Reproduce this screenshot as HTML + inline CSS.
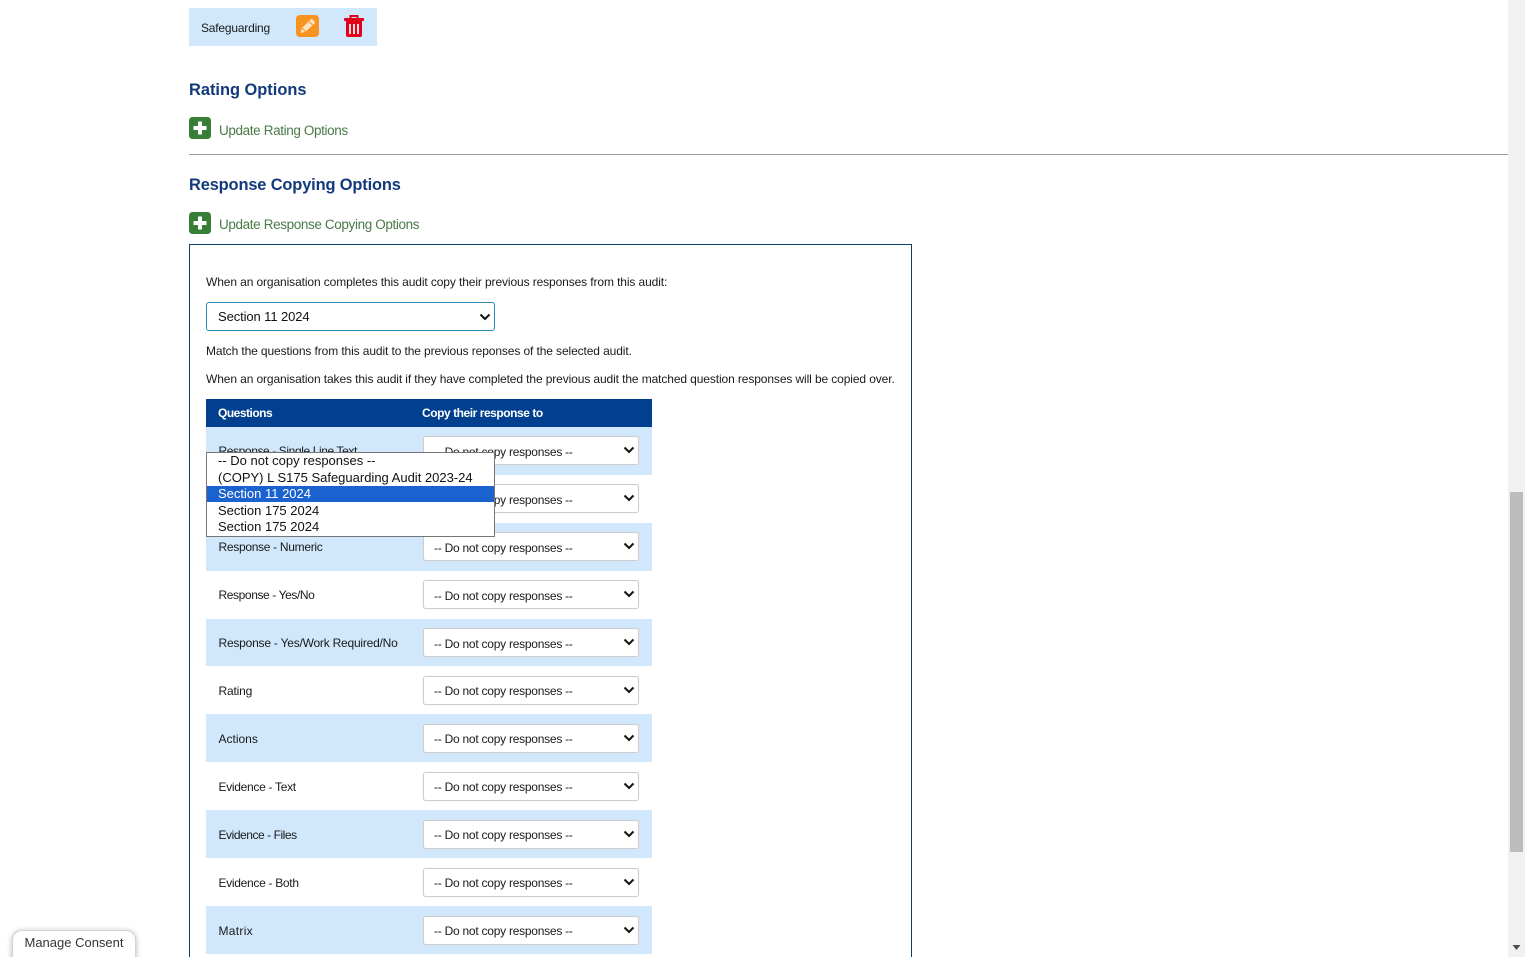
<!DOCTYPE html>
<html lang="en"><head><meta charset="utf-8"><title>Response Copying Options</title>
<style>
html,body{margin:0;padding:0;width:1525px;height:957px;overflow:hidden;background:#fff}
body{position:relative;font-family:"Liberation Sans",sans-serif;color:#111}
.a{position:absolute;white-space:nowrap}
.t{position:absolute;white-space:nowrap;font-size:12px;line-height:16px;letter-spacing:-.11px;color:#1a1a1a}
.r{position:absolute;left:218.500px;white-space:nowrap;font-size:12px;line-height:16px;letter-spacing:-.22px;color:#1a1a1a}
h2{position:absolute;margin:0;white-space:nowrap;font-size:16.400px;line-height:22px;font-weight:bold;color:#12397c;letter-spacing:-.13px}
.l{position:absolute;white-space:nowrap;font-size:13.500px;line-height:18px;color:#4a7a48;letter-spacing:-.37px}
.b{position:absolute;left:206px;width:446px;background:#d1e8fc}
.s{position:absolute;left:423px;width:214px;height:27px;background:#fff;border:1px solid #cdcdcd;border-radius:3px;font-size:12px;line-height:29px;letter-spacing:-.25px;color:#1a1a1a;text-indent:10px;box-shadow:0 0 1px #ddd}
.u{line-height:31px}
.s svg,.m svg{position:absolute;right:3px;top:8px}
.m svg{top:9px}
.p{position:absolute;left:189px;width:22px;height:22px}
.o{padding-left:11px;height:16.400px;line-height:15.400px}
.q{line-height:17.400px}
</style></head><body>

<div class="a" style="left:189px;top:8px;width:188px;height:38px;background:#d1e8fc"></div>
<div class="t" style="left:201px;top:20px;letter-spacing:-.2px">Safeguarding</div>
<svg class="a" style="left:296px;top:15px" width="23" height="23" viewBox="0 0 23 23"><rect width="23" height="22" rx="4" fill="#f7931e"/><path d="M4.500 18l1.200-4.800L14.500 4.500a1.500 1.500 0 0 1 2 0l2 2a1.500 1.500 0 0 1 0 2L9.500 16.800z" fill="#fde3c0"/><path d="M6 13l3.500 3.500M13 6.500l3.500 3.500" stroke="#f7931e" stroke-width="1"/></svg>
<svg class="a" style="left:344px;top:15px" width="20" height="23" viewBox="0 0 20 23"><path d="M6.500 3.500V1h7v2.500" fill="none" stroke="#e3001b" stroke-width="2"/><rect y="3" width="20" height="3" rx="1" fill="#e3001b"/><path d="M2 6h16v14a2 2 0 0 1-2 2H4a2 2 0 0 1-2-2z" fill="#e3001b"/><path d="M6 9v10M10 9v10M14 9v10" stroke="#ffdcdc" stroke-width="2"/></svg>

<h2 style="left:189px;top:79px;letter-spacing:0">Rating Options</h2>
<svg class="p" style="top:117px" viewBox="0 0 22 22"><rect width="22" height="22" rx="3.500" fill="#377d36"/><path d="M11 4.500v13M4.500 11h13" stroke="#fff" stroke-width="4"/></svg>
<div class="l" style="left:219px;top:122px">Update Rating Options</div>
<div class="a" style="left:189px;top:154px;width:1319px;height:1px;background:#999"></div>

<h2 style="left:189px;top:174px">Response Copying Options</h2>
<svg class="p" style="top:212px" viewBox="0 0 22 22"><rect width="22" height="22" rx="3.500" fill="#377d36"/><path d="M11 4.500v13M4.500 11h13" stroke="#fff" stroke-width="4"/></svg>
<div class="l" style="left:219px;top:216px">Update Response Copying Options</div>

<div class="a" style="left:189px;top:244px;width:721px;height:720px;border:1px solid #0e4068"></div>
<div class="t" style="left:206px;top:274px">When an organisation completes this audit copy their previous responses from this audit:</div>
<div class="a m" style="left:206px;top:302px;width:287px;height:27px;border:1px solid #2b8bb5;border-radius:3px;font-size:13px;line-height:27px;text-indent:11px;letter-spacing:-.1px;background:#fff">Section 11 2024<svg width="12" height="10" viewBox="0 0 12 10"><path d="M1.500 2.500L6 7l4.500-4.500" fill="none" stroke="#111" stroke-width="2"/></svg></div>
<div class="t" style="left:206px;top:343px">Match the questions from this audit to the previous reponses of the selected audit.</div>
<div class="t" style="left:206px;top:371px">When an organisation takes this audit if they have completed the previous audit the matched question responses will be copied over.</div>

<div class="a" style="left:206px;top:399px;width:446px;height:28px;background:#00408f"></div>
<div class="t" style="left:218px;top:405px;color:#fff;font-weight:bold;letter-spacing:-.5px">Questions</div>
<div class="t" style="left:422px;top:405px;color:#fff;font-weight:bold;letter-spacing:-.45px">Copy their response to</div>

<div class="b" style="top:427px;height:48px"></div>
<div class="b" style="top:523px;height:48px"></div>
<div class="b" style="top:619px;height:47px"></div>
<div class="b" style="top:714px;height:48px"></div>
<div class="b" style="top:810px;height:48px"></div>
<div class="b" style="top:906px;height:48px"></div>

<div class="r" style="top:443px;letter-spacing:-.4px">Response - Single Line Text</div>
<div class="r" style="top:539px;letter-spacing:-.3px">Response - Numeric</div>
<div class="r" style="top:587px;letter-spacing:-.4px">Response - Yes/No</div>
<div class="r" style="top:635px">Response - Yes/Work Required/No</div>
<div class="r" style="top:683px;letter-spacing:-.18px">Rating</div>
<div class="r" style="top:731px;letter-spacing:0">Actions</div>
<div class="r" style="top:779px;letter-spacing:-.3px">Evidence - Text</div>
<div class="r" style="top:827px;letter-spacing:-.45px">Evidence - Files</div>
<div class="r" style="top:875px;letter-spacing:-.3px">Evidence - Both</div>
<div class="r" style="top:923px;letter-spacing:.3px">Matrix</div>

<div class="s u" style="top:436px">-- Do not copy responses --<svg width="12" height="10" viewBox="0 0 12 10"><path d="M1.500 2.500L6 7l4.500-4.500" fill="none" stroke="#111" stroke-width="2"/></svg></div>
<div class="s u" style="top:484px">-- Do not copy responses --<svg width="12" height="10" viewBox="0 0 12 10"><path d="M1.500 2.500L6 7l4.500-4.500" fill="none" stroke="#111" stroke-width="2"/></svg></div>
<div class="s u" style="top:532px">-- Do not copy responses --<svg width="12" height="10" viewBox="0 0 12 10"><path d="M1.500 2.500L6 7l4.500-4.500" fill="none" stroke="#111" stroke-width="2"/></svg></div>
<div class="s u" style="top:580px">-- Do not copy responses --<svg width="12" height="10" viewBox="0 0 12 10"><path d="M1.500 2.500L6 7l4.500-4.500" fill="none" stroke="#111" stroke-width="2"/></svg></div>
<div class="s u" style="top:628px">-- Do not copy responses --<svg width="12" height="10" viewBox="0 0 12 10"><path d="M1.500 2.500L6 7l4.500-4.500" fill="none" stroke="#111" stroke-width="2"/></svg></div>
<div class="s" style="top:676px">-- Do not copy responses --<svg width="12" height="10" viewBox="0 0 12 10"><path d="M1.500 2.500L6 7l4.500-4.500" fill="none" stroke="#111" stroke-width="2"/></svg></div>
<div class="s" style="top:724px">-- Do not copy responses --<svg width="12" height="10" viewBox="0 0 12 10"><path d="M1.500 2.500L6 7l4.500-4.500" fill="none" stroke="#111" stroke-width="2"/></svg></div>
<div class="s" style="top:772px">-- Do not copy responses --<svg width="12" height="10" viewBox="0 0 12 10"><path d="M1.500 2.500L6 7l4.500-4.500" fill="none" stroke="#111" stroke-width="2"/></svg></div>
<div class="s" style="top:820px">-- Do not copy responses --<svg width="12" height="10" viewBox="0 0 12 10"><path d="M1.500 2.500L6 7l4.500-4.500" fill="none" stroke="#111" stroke-width="2"/></svg></div>
<div class="s" style="top:868px">-- Do not copy responses --<svg width="12" height="10" viewBox="0 0 12 10"><path d="M1.500 2.500L6 7l4.500-4.500" fill="none" stroke="#111" stroke-width="2"/></svg></div>
<div class="s" style="top:916px">-- Do not copy responses --<svg width="12" height="10" viewBox="0 0 12 10"><path d="M1.500 2.500L6 7l4.500-4.500" fill="none" stroke="#111" stroke-width="2"/></svg></div>

<div class="a" style="left:206px;top:452px;width:287px;height:83px;border:1px solid #767676;background:#fff;font-size:13px;color:#111">
<div class="o">-- Do not copy responses --</div>
<div class="o q">(COPY) L S175 Safeguarding Audit 2023-24</div>
<div class="o" style="background:#1a62d0;color:#fff">Section 11 2024</div>
<div class="o q">Section 175 2024</div>
<div class="o">Section 175 2024</div>
</div>

<div class="a" style="left:12px;top:930px;width:122px;height:30px;background:#fff;border:1px solid #d4d4d4;border-radius:10px 10px 0 0;box-shadow:0 1px 6px rgba(0,0,0,.3);font-size:13px;line-height:23px;text-align:center;color:#333">Manage Consent</div>

<div class="a" style="left:1508px;top:0;width:17px;height:957px;background:#f1f1f1"></div>
<div class="a" style="left:1510px;top:492px;width:13px;height:360px;background:#bcbcbc"></div>
<svg class="a" style="left:1512px;top:945px" width="9" height="6" viewBox="0 0 9 6"><path d="M.5 0h8L4.500 5z" fill="#505050"/></svg>
</body></html>
